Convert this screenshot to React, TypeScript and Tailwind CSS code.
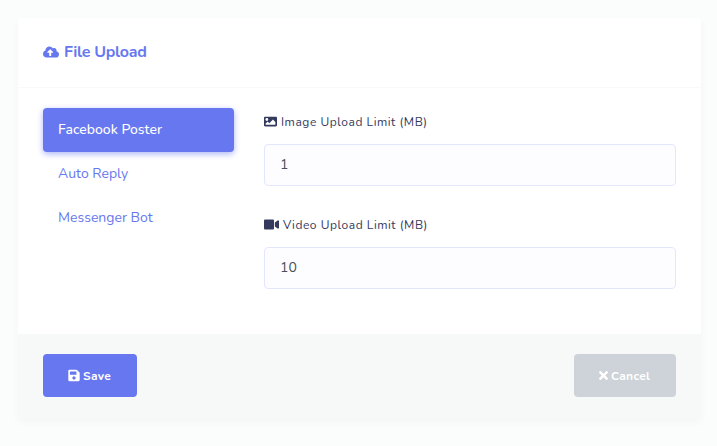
import { FaCloudUploadAlt, FaImage, FaVideo, FaSave, FaTimes } from "react-icons/fa";

export default function App() {
  return (
    <div className="h-[446px] w-[717px] overflow-hidden bg-[#fbfdfc] px-[18px] pt-[18px] font-['Nunito','Lato',sans-serif]">
      <div className="h-[400px] w-[683px] overflow-hidden rounded-[3px] bg-white shadow-[0_4px_8px_rgba(0,0,0,0.03)]">
        <header className="flex h-[70px] items-center gap-[5px] border-b border-[#f9f9f9] px-[25px] pb-[2px] text-[#6777ef]">
          <FaCloudUploadAlt className="mt-px h-4 w-4 shrink-0" />
          <h4 className="text-[16px] leading-7 font-bold tracking-[-0.3px] whitespace-nowrap">File Upload</h4>
        </header>
        <div className="flex h-[246px] gap-[30px] px-[25px] pt-5">
          <nav className="flex w-[191px] flex-col text-[14px] leading-6 text-[#6777ef]">
            <a className="h-11 rounded-[4px] bg-[#6777ef] px-[15px] py-[10px] font-medium text-white shadow-[0_2px_6px_#acb5f6]">Facebook Poster</a>
            <a className="h-11 px-[15px] py-[10px]">Auto Reply</a>
            <a className="h-11 px-[15px] py-[10px]">Messenger Bot</a>
          </nav>
          <div className="w-[412px] text-[#34395e]">
            <label className="mt-1 mb-3 flex h-5 items-center gap-[4px] text-[12px] tracking-[0.54px] whitespace-nowrap">
              <FaImage className="mb-[2px] h-[13px] w-[13px] shrink-0" />
              <span>Image Upload Limit (MB)</span>
            </label>
            <input className="block h-[42px] w-full rounded-[4px] border border-[#e4e6fc] bg-[#fdfdff] px-[15px] pb-[2px] text-[14px] text-[#495057] outline-none" defaultValue="1" />
            <label className="mt-[29px] mb-3 flex h-5 items-center gap-[4px] text-[12px] tracking-[0.54px] whitespace-nowrap">
              <FaVideo className="mb-[2px] h-[15px] w-[15px] shrink-0" />
              <span>Video Upload Limit (MB)</span>
            </label>
            <input className="block h-[42px] w-full rounded-[4px] border border-[#e4e6fc] bg-[#fdfdff] px-[15px] pb-[2px] text-[14px] text-[#495057] outline-none" defaultValue="10" />
          </div>
        </div>
        <footer className="flex h-[84px] items-start justify-between bg-[#f7f9f8] px-[25px] pt-5 text-[12px] font-bold text-white">
          <button className="flex h-[43px] w-[94px] items-center gap-[3px] rounded-[4px] bg-[#6777ef] pl-[25px] tracking-[0.35px]">
            <FaSave className="mb-px h-[13px] w-[12px]" />
            <span>Save</span>
          </button>
          <button className="flex h-[43px] w-[102px] items-center gap-[2px] rounded-[4px] bg-[#cdd3d8] pl-6 tracking-[0.3px]">
            <FaTimes className="h-[13px] w-[11px]" />
            <span>Cancel</span>
          </button>
        </footer>
      </div>
    </div>
  );
}
